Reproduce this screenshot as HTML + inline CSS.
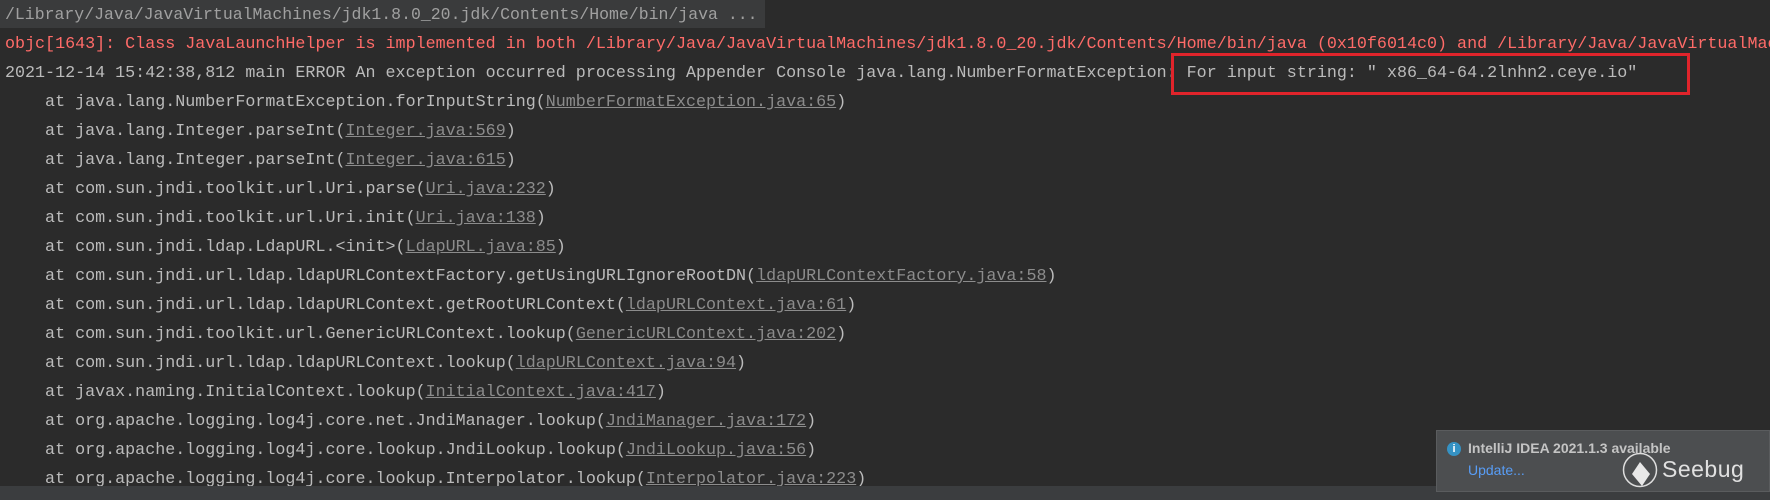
<!DOCTYPE html>
<html><head><style>
body{margin:0;width:1770px;height:500px;background:#2b2b2b;overflow:hidden;position:relative;font-family:"Liberation Mono",monospace;}
.l{position:absolute;left:5px;font-size:16.7px;color:#bbbbbb;white-space:pre;line-height:29px;height:29px;}
.u{color:#8c8c8c;text-decoration:underline;}
.r{color:#ff6b68;}
</style></head><body>
<div style="position:absolute;left:0;top:0;width:765px;height:28px;background:#3a3b3c"></div>
<div class="l" style="top:0;color:#a0a0a0;font-size:16.5px">/Library/Java/JavaVirtualMachines/jdk1.8.0_20.jdk/Contents/Home/bin/java ...</div>
<div class="l r" style="top:30px">objc[1643]: Class JavaLaunchHelper is implemented in both /Library/Java/JavaVirtualMachines/jdk1.8.0_20.jdk/Contents/Home/bin/java (0x10f6014c0) and /Library/Java/JavaVirtualMachines</div>
<div class="l" style="top:59px">2021-12-14 15:42:38,812 main ERROR An exception occurred processing Appender Console java.lang.NumberFormatException: For input string: " x86_64-64.2lnhn2.ceye.io"</div>
<div class="l" style="top:88px">    at java.lang.NumberFormatException.forInputString(<span class="u">NumberFormatException.java:65</span>)</div>
<div class="l" style="top:117px">    at java.lang.Integer.parseInt(<span class="u">Integer.java:569</span>)</div>
<div class="l" style="top:146px">    at java.lang.Integer.parseInt(<span class="u">Integer.java:615</span>)</div>
<div class="l" style="top:175px">    at com.sun.jndi.toolkit.url.Uri.parse(<span class="u">Uri.java:232</span>)</div>
<div class="l" style="top:204px">    at com.sun.jndi.toolkit.url.Uri.init(<span class="u">Uri.java:138</span>)</div>
<div class="l" style="top:233px">    at com.sun.jndi.ldap.LdapURL.&lt;init&gt;(<span class="u">LdapURL.java:85</span>)</div>
<div class="l" style="top:262px">    at com.sun.jndi.url.ldap.ldapURLContextFactory.getUsingURLIgnoreRootDN(<span class="u">ldapURLContextFactory.java:58</span>)</div>
<div class="l" style="top:291px">    at com.sun.jndi.url.ldap.ldapURLContext.getRootURLContext(<span class="u">ldapURLContext.java:61</span>)</div>
<div class="l" style="top:320px">    at com.sun.jndi.toolkit.url.GenericURLContext.lookup(<span class="u">GenericURLContext.java:202</span>)</div>
<div class="l" style="top:349px">    at com.sun.jndi.url.ldap.ldapURLContext.lookup(<span class="u">ldapURLContext.java:94</span>)</div>
<div class="l" style="top:378px">    at javax.naming.InitialContext.lookup(<span class="u">InitialContext.java:417</span>)</div>
<div class="l" style="top:407px">    at org.apache.logging.log4j.core.net.JndiManager.lookup(<span class="u">JndiManager.java:172</span>)</div>
<div class="l" style="top:436px">    at org.apache.logging.log4j.core.lookup.JndiLookup.lookup(<span class="u">JndiLookup.java:56</span>)</div>
<div class="l" style="top:465px">    at org.apache.logging.log4j.core.lookup.Interpolator.lookup(<span class="u">Interpolator.java:223</span>)</div>
<div style="position:absolute;left:1171px;top:53px;width:519px;height:42px;border:3px solid #e0242b;box-sizing:border-box"></div>
<div style="position:absolute;left:0;top:486px;width:1770px;height:14px;background:#3b3d3f"></div>
<div style="position:absolute;left:1436px;top:430px;width:334px;height:62px;background:#4c4e50;border:1px solid #5a5c5e;box-sizing:border-box"></div>
<div style="position:absolute;left:1447px;top:442px;width:14px;height:14px;border-radius:50%;background:#3592c4;color:#fff;font:bold 11px 'Liberation Sans',sans-serif;text-align:center;line-height:14px">i</div>
<div style="position:absolute;left:1468px;top:440px;font:bold 14px 'Liberation Sans',sans-serif;color:#c4c4c4">IntelliJ IDEA 2021.1.3 available</div>
<div style="position:absolute;left:1468px;top:462px;font:14px 'Liberation Sans',sans-serif;color:#589df6">Update...</div>
<svg style="position:absolute;left:1622px;top:452px" width="38" height="40" viewBox="0 0 38 40"><circle cx="18" cy="18" r="16.5" fill="none" stroke="#ddd" stroke-width="1.5"/><path d="M10 22 L18 10 L28 22 L20 34 Z" fill="#e8e8e8"/></svg>
<div style="position:absolute;left:1662px;top:456px;font:23px 'Liberation Sans',sans-serif;color:#e0e0e0;letter-spacing:0.5px">Seebug</div>
</body></html>
